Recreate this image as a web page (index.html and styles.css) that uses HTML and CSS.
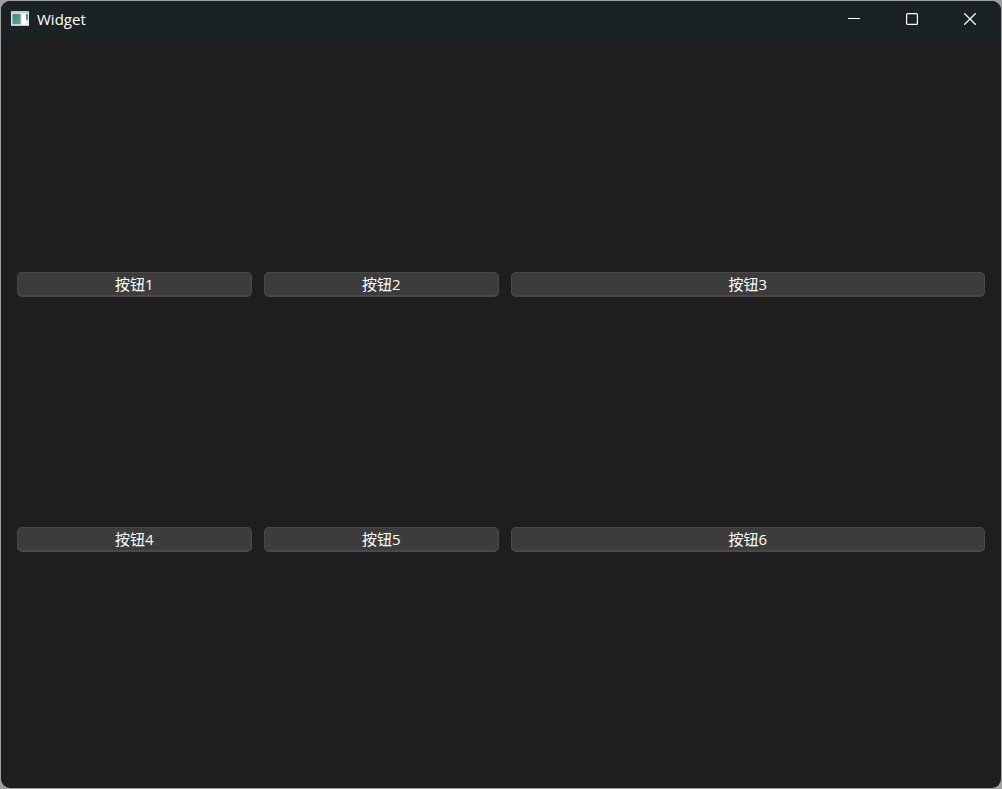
FILE: index.html
```html
<!DOCTYPE html>
<html lang="zh-CN">
<head>
    <meta charset="UTF-8">
    <meta name="viewport" content="width=device-width, initial-scale=1.0">
    <title>Widget</title>
    <link rel="stylesheet" href="styles.css">
</head>
<body>
    <div class="window">
        <header class="titlebar">
            <svg class="app-icon" width="18" height="15" viewBox="0 0 18 15" aria-hidden="true">
                <defs>
                    <linearGradient id="pane" x1="0" y1="0" x2="0.6" y2="1">
                        <stop offset="0" stop-color="#3f7fa6"/>
                        <stop offset="1" stop-color="#58a878"/>
                    </linearGradient>
                </defs>
                <rect width="18" height="15" fill="#e6e9eb"/>
                <rect width="18" height="2" fill="#c3c9cd"/>
                <rect x="1.5" y="3" width="8" height="10" fill="url(#pane)" stroke="#8fa9b0" stroke-width="0.5"/>
                <rect x="11" y="3" width="4" height="11" fill="#fff"/>
                <rect x="15" y="3" width="2" height="6" fill="url(#pane)"/>
                <path d="M0 14.5h18" stroke="#c3c9cd"/>
            </svg>
            <h1 class="title">Widget</h1>
            <div class="controls">
                <button class="control" type="button" aria-label="Minimize">
                    <svg width="12" height="12" viewBox="0 0 12 12"><path d="M0 5.5h12"/></svg>
                </button>
                <button class="control" type="button" aria-label="Maximize">
                    <svg width="12" height="12" viewBox="0 0 12 12"><rect x="0.6" y="0.6" width="10.8" height="10.8" rx="1" stroke-width="1.2"/></svg>
                </button>
                <button class="control" type="button" aria-label="Close">
                    <svg width="12" height="12" viewBox="0 0 12 12"><path d="M0.3 0.3l11.4 11.4M11.7 0.3L0.3 11.7" stroke-width="1.3"/></svg>
                </button>
            </div>
        </header>
        <main class="content">
            <div class="row">
                <button class="btn" type="button">按钮1</button>
                <button class="btn" type="button">按钮2</button>
                <button class="btn" type="button">按钮3</button>
            </div>
            <div class="row">
                <button class="btn" type="button">按钮4</button>
                <button class="btn" type="button">按钮5</button>
                <button class="btn" type="button">按钮6</button>
            </div>
        </main>
    </div>
</body>
</html>
```
FILE: styles.css
```css
* {
    box-sizing: border-box;
    margin: 0;
    padding: 0;
    font-family: 'Open Sans', 'Noto Sans CJK SC', sans-serif;
}
body {
    background: #a0a0a0;
    display: flex;
    min-height: 100vh;
    padding: 1px;
}
.window {
    flex: 1;
    display: flex;
    flex-direction: column;
    background: #1e1e1e;
    border-radius: 9px;
    overflow: hidden;
}
.titlebar {
    display: flex;
    align-items: center;
    height: 37px;
    padding: 0 2px 2px 10px;
    background: #1b2224;
    color: #fff;
}
.title {
    flex: 1;
    margin-left: 8px;
    font-size: 15px;
    font-weight: normal;
    line-height: 20px;
}
.controls {
    display: flex;
    height: 100%;
}
.control {
    display: flex;
    align-items: center;
    justify-content: center;
    width: 58px;
    border: none;
    background: transparent;
}
.control:hover {
    background: #2d3436;
}
.control svg {
    fill: none;
    stroke: #fff;
}
.content {
    flex: 1;
    display: flex;
    flex-direction: column;
    justify-content: space-evenly;
    padding: 4px 16px 6px;
}
.row {
    display: grid;
    grid-template-columns: 99fr 99fr 200fr;
    gap: 12px;
}
.btn {
    height: 25px;
    border: 1px solid #4a4a4a;
    border-bottom: 2px solid #4a4a4a;
    border-radius: 5px;
    background: #3c3c3c;
    color: #fff;
    font-size: 15px;
    line-height: 22px;
}
.btn:hover {
    background: #444;
}
```
